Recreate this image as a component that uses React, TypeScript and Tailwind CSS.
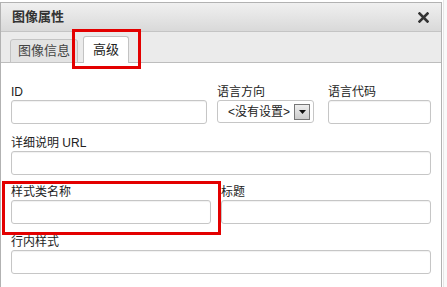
import React from "react";

const font = { fontFamily: '"Liberation Sans", "Noto Sans CJK SC", sans-serif' };

function Field({ label, className }: { label: string; className: string }) {
  return (
    <div className={className}>
      <div className="h-[15px] text-[12px] leading-[15px] text-[#222]">{label}</div>
      <div className="mt-[0px] h-[24px] rounded-[3px] border border-[#c6c6c6] bg-white shadow-[inset_0_1px_1px_rgba(0,0,0,0.06)]" />
    </div>
  );
}

export default function App() {
  return (
    <div className="relative h-[287px] w-[447px] overflow-hidden bg-white" style={font}>
      <div className="flex h-full">
        <div className="mt-[2px] flex w-[442px] flex-col border-x border-t border-[#b2b2b2] bg-white">
          {/* title */}
          <div className="flex h-[29px] items-center justify-between border-b border-[#c4c4c4] bg-gradient-to-b from-[#f0f0f0] to-[#d9d9d9] pl-[11px] pr-[12px]">
            <span className="text-[13px] font-bold text-[#333]">图像属性</span>
            <svg width="11" height="11" viewBox="0 0 11 11">
              <path d="M1.5 1.5 L9.5 9.5 M9.5 1.5 L1.5 9.5" stroke="#333" strokeWidth="2.6" strokeLinecap="square" />
            </svg>
          </div>
          {/* tabs */}
          <div className="flex h-[31px] items-end gap-[5px] border-b border-[#bdbdbd] bg-[#ebebeb] pl-[9px]">
            <div className="-mb-px flex h-[24px] items-center rounded-t-[3px] border border-[#c3c3c3] bg-[#e3e3e3] px-[7px] text-[13px] text-[#444]">
              图像信息
            </div>
            <div className="-mb-px flex h-[27px] items-center rounded-t-[3px] border border-b-0 border-[#c3c3c3] bg-white px-[9px] text-[13px] text-[#222]">
              高级
            </div>
          </div>
          {/* body */}
          <div className="flex flex-col pl-[10px] pt-[22px]">
            <div className="flex">
              <Field label="ID" className="w-[196px]" />
              <div className="ml-[10px] w-[97px]">
                <div className="h-[15px] text-[12px] leading-[15px] text-[#222]">语言方向</div>
                <div className="flex h-[23px] items-center rounded-[3px] border border-[#c6c6c6] bg-white pl-[10px] pr-[3px]">
                  <span className="flex-1 text-[12px] text-[#222]">&lt;没有设置&gt;</span>
                  <div className="flex h-[16px] w-[16px] items-center justify-center border border-[#777] bg-gradient-to-b from-[#eee] to-[#ccc]">
                    <svg width="7" height="4" viewBox="0 0 7 4">
                      <path d="M0 0 H7 L3.5 4 Z" fill="#111" />
                    </svg>
                  </div>
                </div>
              </div>
              <Field label="语言代码" className="ml-[14px] w-[103px]" />
            </div>
            <Field label="详细说明 URL" className="mt-[12px] w-[420px]" />
            <div className="mt-[10px] flex">
              <Field label="样式类名称" className="w-[200px]" />
              <Field label="标题" className="ml-[10px] w-[210px]" />
            </div>
            <Field label="行内样式" className="mt-[11px] w-[420px]" />
          </div>
        </div>
        <div className="ml-[1px] w-[4px] border-l border-[#e6e6e6] bg-[#fafafa]" />
      </div>
      {/* red annotation boxes */}
      <div className="absolute left-[72px] top-[29px] h-[40px] w-[69px] border-[3px] border-[#e30000]" />
      <div className="absolute left-[2px] top-[181px] h-[54px] w-[219px] border-[3px] border-[#e30000]" />
    </div>
  );
}
